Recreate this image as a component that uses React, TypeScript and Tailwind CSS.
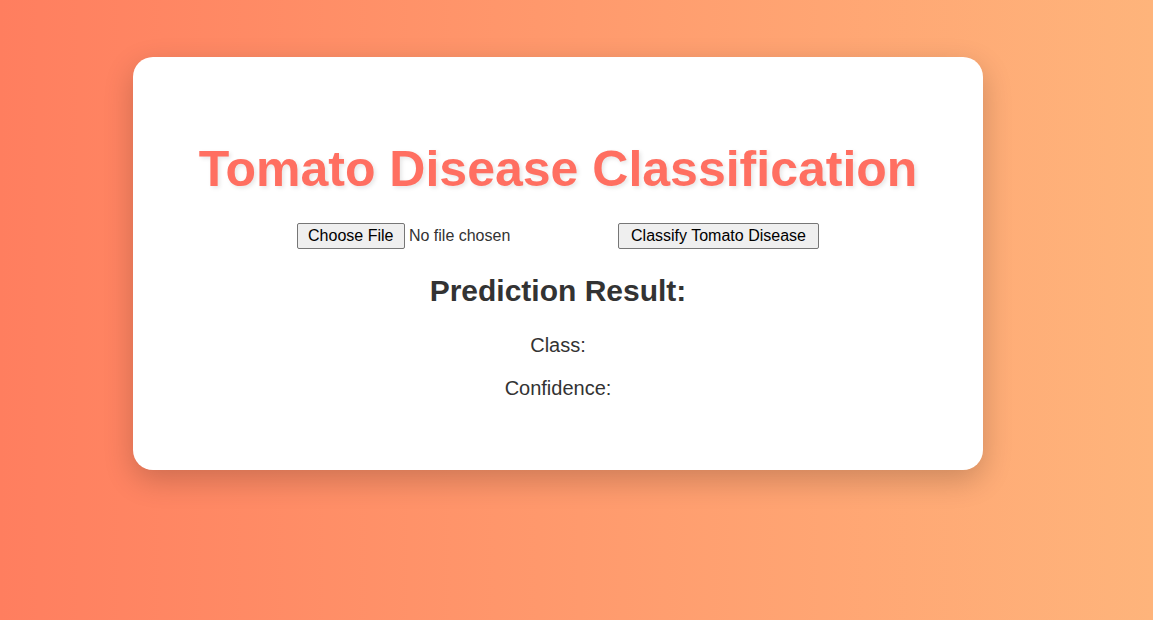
const App = () => {
    return (
        <div className="min-h-screen w-full bg-linear-to-r from-[#ff7e5f] to-[#feb47b] pt-[57px] pl-[133px] font-['Liberation_Sans',Arial,sans-serif]">
            {/* Card */}
            <div className="w-[850px] rounded-[20px] bg-white pt-[84px] pb-[70px] text-center text-[#333] shadow-[0_10px_30px_rgba(0,0,0,0.2)]">
                <h1 className="text-[50px] leading-[57.5px] font-bold text-[#ff6f61] [text-shadow:2px_2px_4px_rgba(0,0,0,0.1)]">
                    Tomato Disease Classification
                </h1>

                {/* Upload row */}
                <div className="mt-[24.5px] flex h-[26px] items-center justify-center">
                    <input
                        type="file"
                        className="w-[301px] text-[16px] leading-[18px] text-[#333] file:mr-[4px] file:h-[26px] file:cursor-default file:rounded-[2px] file:border file:border-solid file:border-[#767676] file:bg-[#efefef] file:px-[10.5px] file:text-black file:leading-[18px]"
                    />
                    <button className="ml-[20px] h-[26px] rounded-[2px] border border-[#767676] bg-[#efefef] px-[12.5px] text-[16px] leading-[18px] text-black">
                        Classify Tomato Disease
                    </button>
                </div>

                <h2 className="mt-[25px] text-[30px] leading-[34.5px] font-bold">Prediction Result:</h2>
                <p className="mt-[25.5px] text-[20px] leading-[23px]">Class: <span></span></p>
                <p className="mt-[20px] text-[20px] leading-[23px]">Confidence: <span></span></p>
            </div>
        </div>
    )
}

export default App
